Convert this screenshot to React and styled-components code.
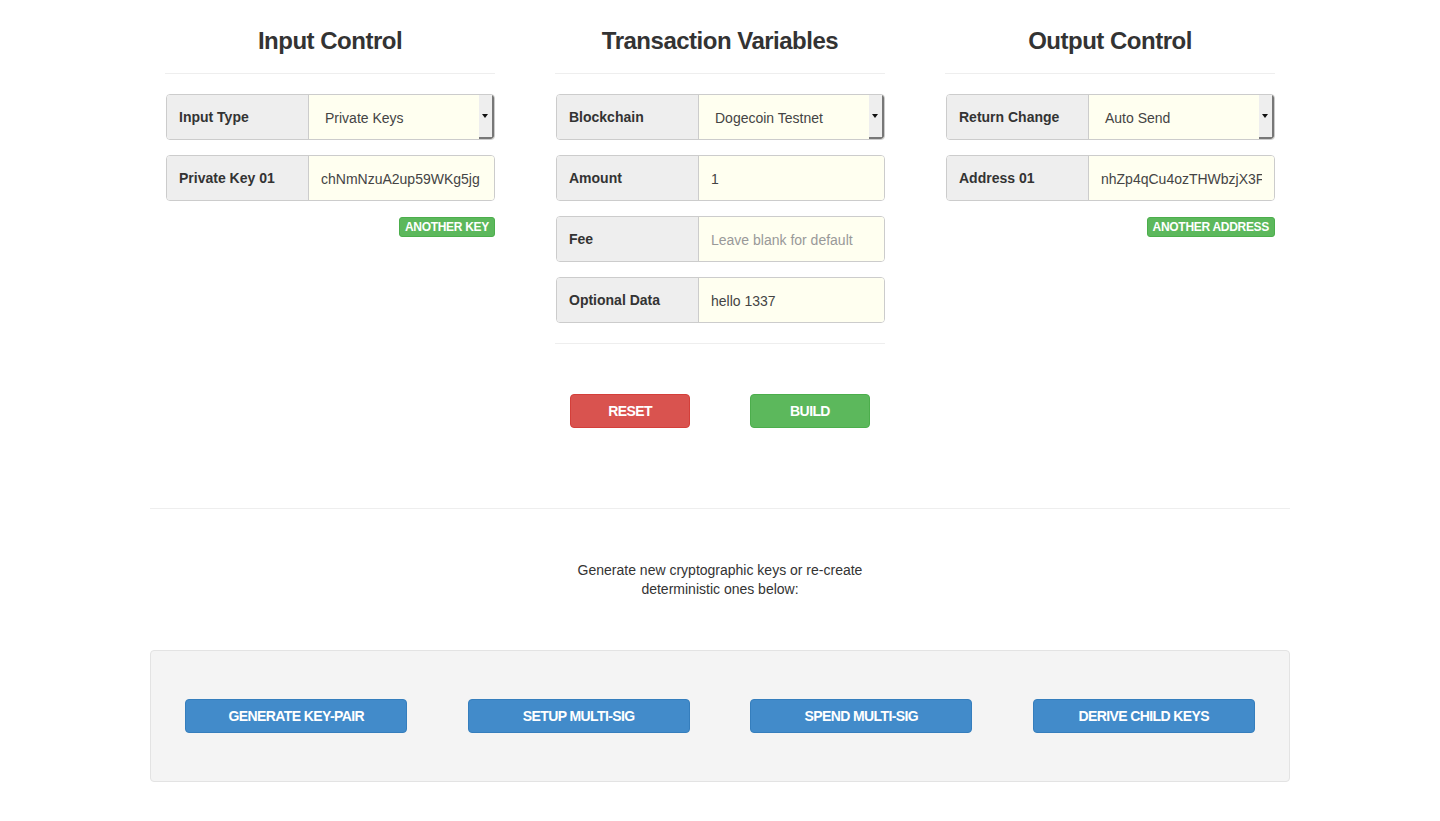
import React from "react";
import styled, { createGlobalStyle } from "styled-components";

const GlobalStyle = createGlobalStyle`
  html, body { margin: 0; padding: 0; background: #fff; }
  body {
    font-family: "Liberation Sans", Arial, Helvetica, sans-serif;
    font-size: 14px;
    line-height: 1.428;
    color: #333;
  }
  * { box-sizing: border-box; }
`;

const Container = styled.div`
  width: 1140px;
  margin: 0 auto;
  padding-bottom: 40px;
`;

const TopGrid = styled.div`
  display: grid;
  grid-template-columns: repeat(3, 330px);
  column-gap: 60px;
  padding: 0 15px;
  align-items: start;
`;

const Column = styled.section`
  display: flex;
  flex-direction: column;
`;

const Heading = styled.h3`
  margin: 0;
  padding-top: 28px;
  font-size: 24px;
  line-height: 26px;
  font-weight: 700;
  letter-spacing: -0.5px;
  text-align: center;
  color: #333;
`;

const Rule = styled.hr`
  margin: ${(p) => p.$m || "19px 0 20px"};
  border: 0;
  border-top: 1px solid #eee;
  height: 0;
`;

const Groups = styled.div`
  display: flex;
  flex-direction: column;
  gap: 15px;
`;

const Group = styled.div`
  display: flex;
  height: 46px;
  margin-left: 1px;
  border: 1px solid #ccc;
  border-radius: 4px;
  overflow: hidden;
`;

const Addon = styled.div`
  width: 142px;
  flex: none;
  display: flex;
  align-items: center;
  padding: 1px 0 0 12px;
  background: #eee;
  border-right: 1px solid #ccc;
  font-weight: 700;
  font-size: 14px;
  color: #333;
`;

const Field = styled.div`
  flex: 1;
  min-width: 0;
  display: flex;
  align-items: center;
  padding: 3px ${(p) => (p.$select ? "0" : "12px")} 0 ${(p) => (p.$select ? "16px" : "12px")};
  background: #fffff0;
  font-size: 14px;
  color: ${(p) => (p.$placeholder ? "#999" : "#444")};
`;

const FieldText = styled.span`
  display: block;
  width: 100%;
  white-space: nowrap;
  overflow: hidden;
`;

const SelectWrap = styled.div`
  flex: 1;
  min-width: 0;
  display: flex;
  background: #fffff0;
`;

const SelectArrow = styled.div`
  width: 15px;
  flex: none;
  display: flex;
  align-items: center;
  justify-content: center;
  padding-right: 1px;
  background: #eee;
  border-right: 2px solid #777;
  border-bottom: 2px solid #777;
  border-bottom-right-radius: 3px;
  &::after {
    content: "";
    width: 0;
    height: 0;
    border-left: 3px solid transparent;
    border-right: 3px solid transparent;
    border-top: 4px solid #111;
  }
`;

const SmallRow = styled.div`
  display: flex;
  justify-content: flex-end;
  margin-top: 16px;
`;

const SmallButton = styled.button`
  height: 20px;
  padding: 0 5px;
  border: 1px solid #4cae4c;
  border-radius: 3px;
  background: #5cb85c;
  color: #fff;
  font-family: inherit;
  font-size: 12px;
  font-weight: 700;
  letter-spacing: -0.3px;
  line-height: 18px;
  text-transform: uppercase;
`;

const ActionRow = styled.div`
  display: flex;
  justify-content: center;
  gap: 60px;
  margin-top: 30px;
`;

const Button = styled.button`
  width: ${(p) => p.$w || "120px"};
  height: 34px;
  padding: 0;
  border-radius: 4px;
  border: 1px solid ${(p) => p.$border};
  background: ${(p) => p.$bg};
  color: #fff;
  font-family: inherit;
  font-size: 14px;
  font-weight: 700;
  letter-spacing: -0.6px;
  text-transform: uppercase;
  justify-self: center;
`;

const Intro = styled.p`
  width: 330px;
  margin: 52px auto 51px;
  text-align: center;
  font-size: 14px;
  line-height: 19px;
  color: #333;
`;

const Well = styled.div`
  display: grid;
  grid-template-columns: repeat(4, 1fr);
  padding: 48px 4px;
  background: #f4f4f4;
  border: 1px solid #e3e3e3;
  border-radius: 4px;
`;

const colors = {
  green: { bg: "#5cb85c", border: "#4cae4c" },
  red: { bg: "#d9534f", border: "#d43f3a" },
  blue: { bg: "#428bca", border: "#357ebd" },
};

function InputGroup({ label, value, select, placeholder }) {
  return (
    <Group>
      <Addon>{label}</Addon>
      {select ? (
        <SelectWrap>
          <Field $select>{value}</Field>
          <SelectArrow />
        </SelectWrap>
      ) : (
        <Field $placeholder={!value}>
          <FieldText>{value || placeholder}</FieldText>
        </Field>
      )}
    </Group>
  );
}

export default function App() {
  return (
    <>
      <GlobalStyle />
      <Container>
        <TopGrid>
          <Column>
            <Heading>Input Control</Heading>
            <Rule />
            <Groups>
              <InputGroup label="Input Type" value="Private Keys" select />
              <InputGroup label="Private Key 01" value="chNmNzuA2up59WKg5jg WYx" />
            </Groups>
            <SmallRow>
              <SmallButton>Another Key</SmallButton>
            </SmallRow>
          </Column>

          <Column>
            <Heading>Transaction Variables</Heading>
            <Rule />
            <Groups>
              <InputGroup label="Blockchain" value="Dogecoin Testnet" select />
              <InputGroup label="Amount" value="1" />
              <InputGroup label="Fee" placeholder="Leave blank for default" />
              <InputGroup label="Optional Data" value="hello 1337" />
            </Groups>
            <Rule $m="20px 0 20px" />
            <ActionRow>
              <Button $bg={colors.red.bg} $border={colors.red.border}>Reset</Button>
              <Button $bg={colors.green.bg} $border={colors.green.border}>Build</Button>
            </ActionRow>
          </Column>

          <Column>
            <Heading>Output Control</Heading>
            <Rule />
            <Groups>
              <InputGroup label="Return Change" value="Auto Send" select />
              <InputGroup label="Address 01" value="nhZp4qCu4ozTHWbzjX3Fq" />
            </Groups>
            <SmallRow>
              <SmallButton>Another Address</SmallButton>
            </SmallRow>
          </Column>
        </TopGrid>

        <Rule $m="80px 0 0" />

        <Intro>
          Generate new cryptographic keys or re-create deterministic ones below:
        </Intro>

        <Well>
          {["Generate Key-Pair", "Setup Multi-Sig", "Spend Multi-Sig", "Derive Child Keys"].map((t) => (
            <Button key={t} $w="222px" $bg={colors.blue.bg} $border={colors.blue.border}>
              {t}
            </Button>
          ))}
        </Well>
      </Container>
    </>
  );
}
